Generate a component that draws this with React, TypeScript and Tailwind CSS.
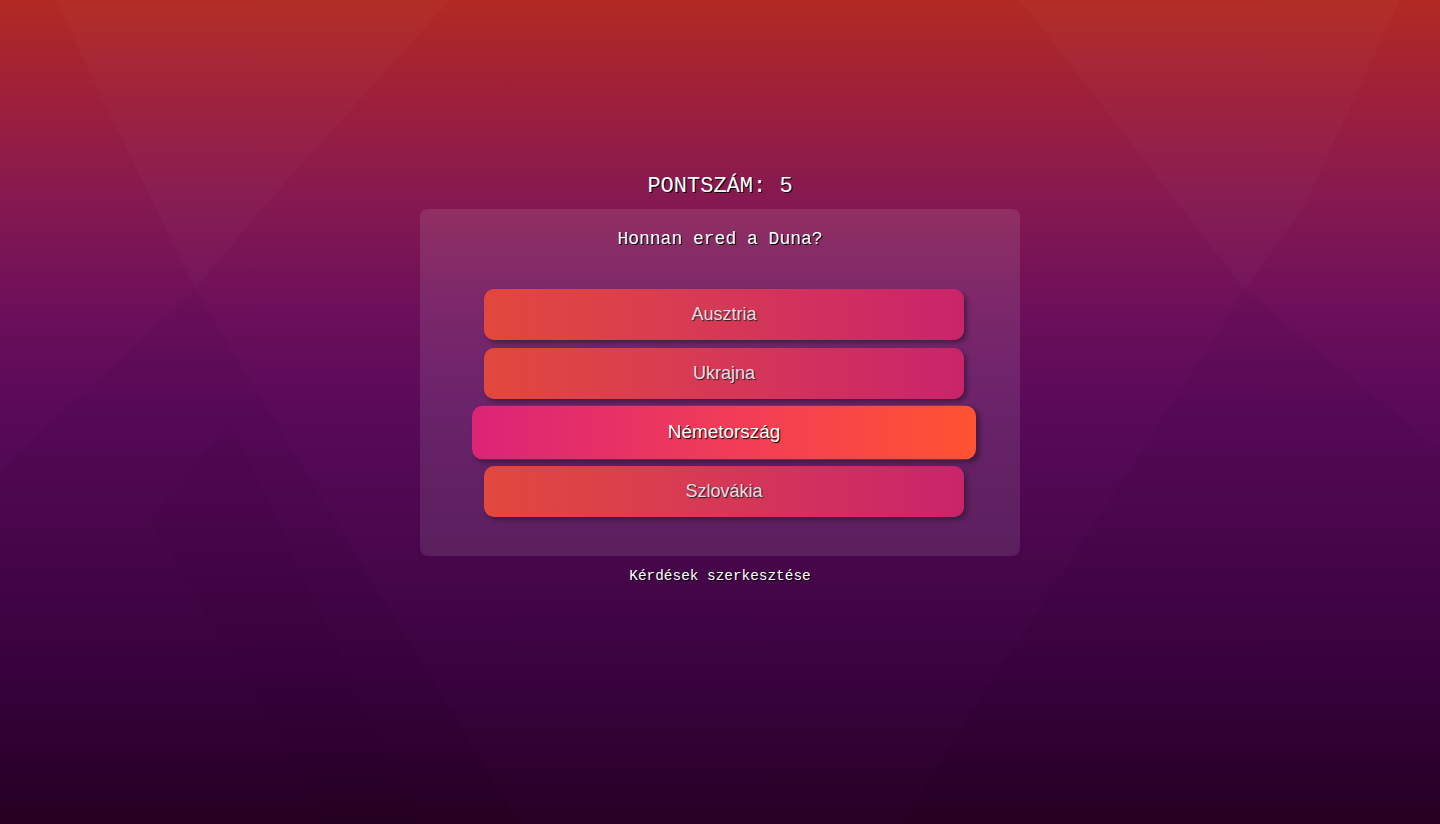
import React from 'react';

const answers = ['Ausztria', 'Ukrajna', 'Németország', 'Szlovákia'];
const activeIndex = 2;

// faint lighter / darker facets of the wallpaper
const Backdrop: React.FC = () => (
  <svg className="absolute inset-0 w-full h-full pointer-events-none" viewBox="0 0 1440 824" preserveAspectRatio="none">
    <polygon points="55,0 450,0 265,205 195,290" fill="#ffffff" opacity="0.018" />
    <polygon points="195,290 0,470 0,824 520,824" fill="#000000" opacity="0.03" />
    <polygon points="1020,0 1400,0 1305,205 1245,290" fill="#ffffff" opacity="0.018" />
    <polygon points="1245,290 1440,450 1440,824 900,824" fill="#000000" opacity="0.03" />
    <polygon points="230,420 420,824 330,824 150,520" fill="#000000" opacity="0.015" />
  </svg>
);

export default function App() {
  return (
    <div className="relative min-h-screen h-[824px] w-full overflow-hidden bg-[linear-gradient(180deg,#b22a22_0%,#9e1f3c_12%,#861950_24%,#6c0f5b_38%,#590a59_50%,#48064b_68%,#39033f_82%,#270024_100%)]">
      <Backdrop />
      <div className="relative flex flex-col items-center pt-[173px] font-['Liberation_Mono','Courier_New',monospace] text-white">
        <h1 className="text-[22px] leading-[28px] [text-shadow:1px_1px_0_#000]">PONTSZÁM: 5</h1>

        <div className="mt-[8px] w-[600px] rounded-lg bg-white/10 pt-[18px] pb-[39px] flex flex-col items-center">
          <h2 className="text-[18px] leading-[24px] [text-shadow:1px_1px_0_#000]">Honnan ered a Duna?</h2>

          <div className="mt-[38px] ml-2 flex flex-col gap-2 w-[480px]">
            {answers.map((a, i) =>
              i === activeIndex ? (
                <button
                  key={a}
                  className="h-[51px] w-full scale-105 rounded-[10px] bg-[linear-gradient(90deg,#dc2477_0%,#f23e55_55%,#ff5331_100%)] font-['Liberation_Sans',Arial,sans-serif] text-[18px] text-white shadow-[3px_3px_4px_rgba(40,20,40,0.55)] [text-shadow:1px_1px_1px_#000]"
                >
                  {a}
                </button>
              ) : (
                <button
                  key={a}
                  className="h-[51px] w-full rounded-[10px] bg-[linear-gradient(90deg,#e2483c_0%,#d83c52_40%,#c9246b_100%)] font-['Liberation_Sans',Arial,sans-serif] text-[18px] text-[#eadbe6] shadow-[3px_3px_4px_rgba(40,20,40,0.55)] [text-shadow:1px_1px_1px_#222]"
                >
                  {a}
                </button>
              )
            )}
          </div>
        </div>

        <a className="mt-[10px] text-[14.4px] leading-[20px] cursor-pointer [text-shadow:1px_1px_0_#000]">Kérdések szerkesztése</a>
      </div>
    </div>
  );
}
